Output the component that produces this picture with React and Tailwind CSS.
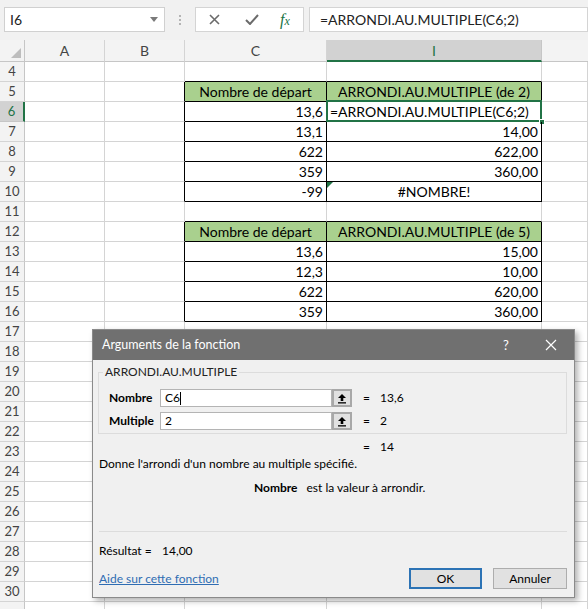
import React from 'react';

const cellFont = { fontFamily: 'Lato, "Open Sans", sans-serif' };
const uiFont = { fontFamily: 'Lato, "Noto Sans", sans-serif' };

const data = {
  5: ['Nombre de départ', 'ARRONDI.AU.MULTIPLE (de 2)'],
  6: ['13,6', ''],
  7: ['13,1', '14,00'],
  8: ['622', '622,00'],
  9: ['359', '360,00'],
  10: ['-99', '#NOMBRE!'],
  12: ['Nombre de départ', 'ARRONDI.AU.MULTIPLE (de 5)'],
  13: ['13,6', '15,00'],
  14: ['12,3', '10,00'],
  15: ['622', '620,00'],
  16: ['359', '360,00'],
};

const rows = Array.from({ length: 28 }, (_, i) => i + 4);

function GridRow({ n }) {
  const inTable = (n >= 5 && n <= 10) || (n >= 12 && n <= 16);
  const head = n === 5 || n === 12;
  const above = n === 4 || n === 11;
  const sel = n === 6;
  const vals = data[n];

  return (
    <div className="flex h-[20px]">
      <div
        className={
          sel
            ? 'w-[25px] shrink-0 flex items-center justify-center bg-[#d2d2d2] border-r-2 border-r-[#217346] border-b border-b-[#c6c6c6] text-[13px] text-[#217346]'
            : 'w-[25px] shrink-0 flex items-center justify-center bg-[#f3f3f3] border-r border-r-[#c6c6c6] border-b border-b-[#d4d4d4] text-[13px] text-[#444]'
        }
      >
        {n < 31 ? n : ''}
      </div>
      <div className="w-[80px] shrink-0 border-r border-b border-[#d4d4d4]" />
      <div
        className={
          inTable
            ? 'w-[80px] shrink-0 border-r border-r-black border-b border-b-[#d4d4d4]'
            : 'w-[80px] shrink-0 border-r border-b border-[#d4d4d4]'
        }
      />
      <div
        className={
          (inTable || above
            ? 'border-b-black '
            : 'border-b-[#d4d4d4] ') +
          (inTable ? 'border-r-black ' : 'border-r-[#d4d4d4] ') +
          (head ? 'bg-[#a9d08e] justify-center ' : 'justify-end ') +
          'w-[142px] shrink-0 flex items-center border-r border-b px-[3px] text-[14px] text-black leading-none'
        }
      >
        {vals ? vals[0] : ''}
      </div>
      <div
        className={
          (inTable || above
            ? 'border-b-black '
            : 'border-b-[#d4d4d4] ') +
          (inTable ? 'border-r-black ' : 'border-r-[#d4d4d4] ') +
          (head ? 'bg-[#a9d08e] ' : '') +
          (head || n === 10 ? 'justify-center ' : sel ? 'justify-start ' : 'justify-end ') +
          'relative w-[215px] shrink-0 flex items-center border-r border-b px-[3px] text-[14px] text-black leading-none'
        }
      >
        {sel ? '=ARRONDI.AU.MULTIPLE(C6;2)' : vals ? vals[1] : ''}
        {sel && (
          <>
            <div className="absolute -left-px -top-[2px] -right-px -bottom-px border-2 border-[#217346]" />
            <div className="absolute -right-[4px] -bottom-[4px] w-[6px] h-[6px] bg-[#217346] border border-white" />
          </>
        )}
        {n === 10 && (
          <svg className="absolute left-0 top-0" width="6" height="6" viewBox="0 0 6 6">
            <polygon points="0,0 6,0 0,6" fill="#217346" />
          </svg>
        )}
      </div>
      <div className="flex-1 border-r border-b border-[#d4d4d4]" />
    </div>
  );
}

function UpArrowButton() {
  return (
    <div className="w-[20px] h-[18px] shrink-0 flex items-center justify-center bg-[#e1e1e1] border-2 border-[#a8a8a8]">
      <svg width="10" height="11" viewBox="0 0 10 11">
        <path d="M5 1 L9 5 H6.3 V8 H3.7 V5 H1 Z" fill="#000" />
        <rect x="1" y="9.2" width="8" height="1.3" fill="#000" />
      </svg>
    </div>
  );
}

function ArgRow({ label, value, result, caret }) {
  return (
    <div className="flex items-center h-[18px]">
      <div className="w-[57px] pl-[6px] font-bold text-[12px] text-black">{label}</div>
      <div className="w-[172px] h-[18px] bg-white border border-[#b4b4b4] flex items-center pl-[4px] text-[12px] text-black">
        {value}
        {caret && <span className="inline-block h-[13px] border-l border-black" />}
      </div>
      <UpArrowButton />
      <div className="ml-[11px] w-[17px] text-[12px] text-black">=</div>
      <div className="text-[12px] text-black">{result}</div>
    </div>
  );
}

function Dialog() {
  return (
    <div
      style={uiFont}
      className="absolute left-[92px] top-[329px] w-[483px] bg-[#f0f0f0] border border-[#8a8a8a] shadow-[3px_3px_6px_rgba(0,0,0,0.3)]"
    >
      <div className="h-[30px] bg-[#707070] flex items-center pl-[9px] text-white text-[12.5px] relative">
        Arguments de la fonction
        <span className="absolute left-[410px] top-[6px] text-[13px] text-white">?</span>
        <svg className="absolute left-[452px] top-[9px]" width="12" height="12" viewBox="0 0 12 12">
          <path d="M1 1 L11 11 M11 1 L1 11" stroke="#fff" strokeWidth="1.2" />
        </svg>
      </div>
      <div className="pt-[4px] pb-[8px] text-[12px] text-black">
        <fieldset className="ml-[5px] w-[469px] border border-[#dcdcdc] pl-[4px] pb-[3px]">
          <legend className="px-[2px] leading-[16px] text-[12px] text-[#222]">ARRONDI.AU.MULTIPLE</legend>
          <div className="mt-[9px] flex flex-col gap-[5px]">
            <ArgRow label="Nombre" value="C6" result="13,6" caret />
            <ArgRow label="Multiple" value="2" result="2" />
          </div>
        </fieldset>
        <div className="mt-[5px] h-[16px] leading-[16px] flex pl-[270px]">
          <span className="w-[17px]">=</span>
          <span>14</span>
        </div>
        <div className="mt-[1px] h-[16px] leading-[16px] pl-[6px]">
          Donne l'arrondi d'un nombre au multiple spécifié.
        </div>
        <div className="mt-[8px] h-[16px] leading-[16px] pl-[161px] flex">
          <span className="font-bold">Nombre</span>
          <span className="ml-[9px]">est la valeur à arrondir.</span>
        </div>
        <div className="mt-[35px] ml-[6px] w-[468px] h-px bg-[#dcdcdc]" />
        <div className="mt-[11px] h-[16px] leading-[16px] pl-[6px] flex">
          <span className="w-[63px]">Résultat =</span>
          <span>14,00</span>
        </div>
        <div className="mt-[9px] h-[21px] flex items-center pl-[6px] pr-[7px]">
          <span className="text-[#2f6db3] underline">Aide sur cette fonction</span>
          <div className="ml-auto flex gap-[11px]">
            <div className="w-[73px] h-[21px] flex items-center justify-center bg-[#e1e1e1] border-2 border-[#2c73b5]">OK</div>
            <div className="w-[74px] h-[21px] flex items-center justify-center bg-[#e1e1e1] border border-[#adadad]">Annuler</div>
          </div>
        </div>
      </div>
    </div>
  );
}

export default function App() {
  return (
    <div className="relative w-[588px] h-[609px] overflow-hidden bg-white" style={cellFont}>
      {/* formula bar */}
      <div className="h-[40px] bg-[#f1f1f1] flex items-start pt-[7px] pl-[4px]">
        <div className="w-[161px] h-[25px] bg-white border border-[#d0d0d0] flex items-center pl-[5px] pr-[6px] text-[14px] text-[#222]">
          I6
          <svg className="ml-auto" width="8" height="5" viewBox="0 0 8 5">
            <polygon points="0,0 8,0 4,5" fill="#7a7a7a" />
          </svg>
        </div>
        <div className="w-[30px] h-[25px] flex flex-col items-center justify-center gap-[2px]">
          <span className="w-[2px] h-[2px] bg-[#b4b4b4]" />
          <span className="w-[2px] h-[2px] bg-[#b4b4b4]" />
          <span className="w-[2px] h-[2px] bg-[#b4b4b4]" />
        </div>
        <div className="w-[109px] h-[25px] bg-white border border-[#d4d4d4] flex items-center">
          <svg className="ml-[13px]" width="11" height="11" viewBox="0 0 11 11">
            <path d="M1 1 L10 10 M10 1 L1 10" stroke="#6b6b6b" strokeWidth="1.6" />
          </svg>
          <svg className="ml-[25px]" width="14" height="11" viewBox="0 0 14 11">
            <path d="M1 6 L5 10 L13 1" stroke="#6b6b6b" strokeWidth="2" fill="none" />
          </svg>
          <span
            className="ml-[21px] text-[16px] italic text-[#217346]"
            style={{ fontFamily: '"Liberation Serif", serif' }}
          >
            f<span className="text-[12px]">x</span>
          </span>
        </div>
        <div className="ml-[5px] flex-1 h-[25px] bg-white border border-[#d4d4d4] flex items-center pl-[10px] text-[14px] text-[#222]">
          =ARRONDI.AU.MULTIPLE(C6;2)
        </div>
      </div>

      {/* column headers */}
      <div className="flex h-[22px] bg-[#f3f3f3] text-[14px] text-[#444]">
        <div className="w-[25px] shrink-0 relative border-r border-b border-[#c6c6c6]">
          <svg className="absolute right-[3px] bottom-[3px]" width="10" height="10" viewBox="0 0 10 10">
            <polygon points="10,0 10,10 0,10" fill="#bdbdbd" />
          </svg>
        </div>
        <div className="w-[80px] shrink-0 flex items-center justify-center border-r border-r-[#d4d4d4] border-b border-b-[#c6c6c6]">A</div>
        <div className="w-[80px] shrink-0 flex items-center justify-center border-r border-r-[#d4d4d4] border-b border-b-[#c6c6c6]">B</div>
        <div className="w-[142px] shrink-0 flex items-center justify-center border-r border-r-[#d4d4d4] border-b border-b-[#c6c6c6]">C</div>
        <div className="w-[215px] shrink-0 flex items-center justify-center bg-[#d2d2d2] border-r border-r-[#c6c6c6] border-b-2 border-b-[#217346] text-[#217346]">I</div>
        <div className="flex-1 border-b border-[#c6c6c6]" />
      </div>

      {rows.map((n) => (
        <GridRow key={n} n={n} />
      ))}

      <Dialog />
    </div>
  );
}
